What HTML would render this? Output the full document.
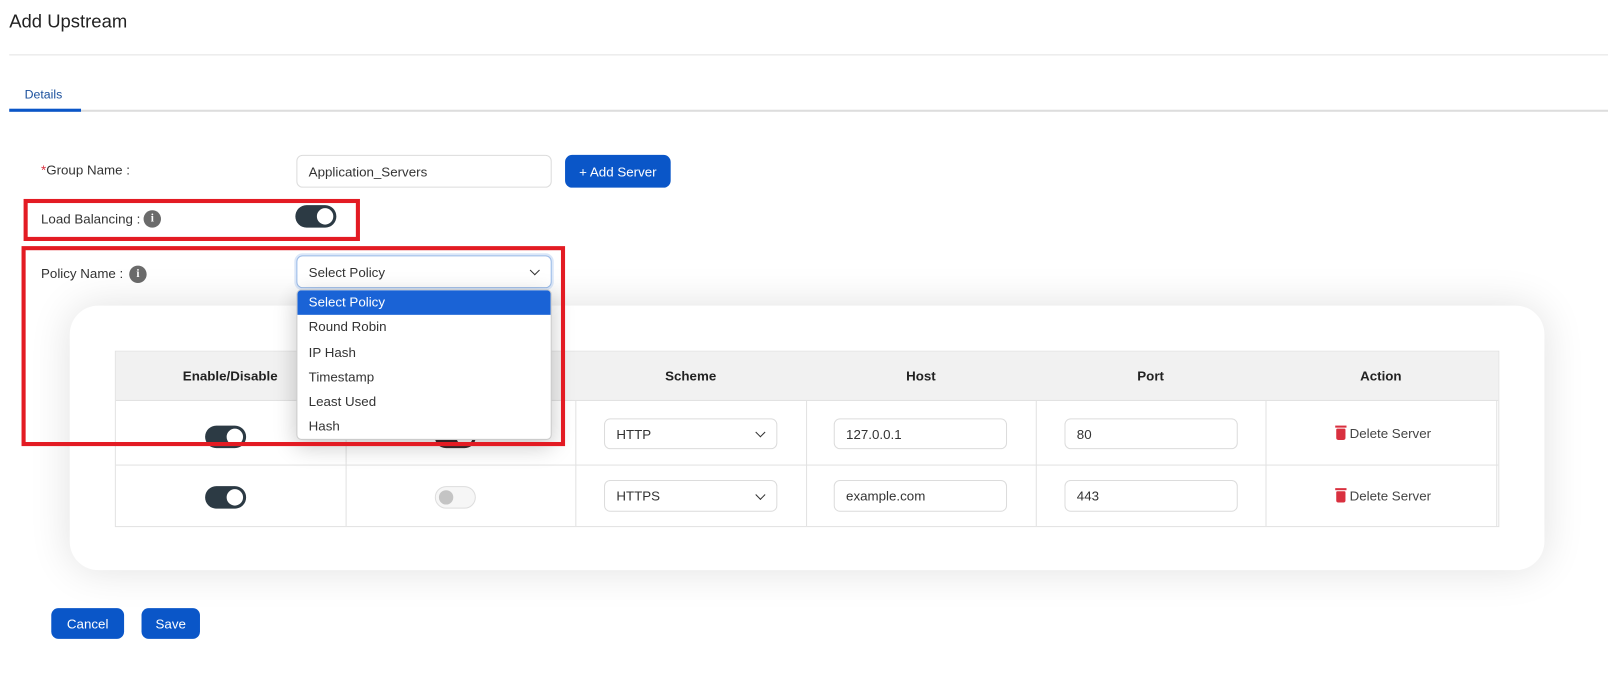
<!DOCTYPE html>
<html><head><meta charset="utf-8"><style>
*{box-sizing:border-box;margin:0;padding:0}
body{width:1608px;height:674px;background:#fff;font-family:"Liberation Sans",sans-serif;color:#333;position:relative;overflow:hidden}
#w{position:absolute;left:0;top:0;width:1568px;height:658px;transform:scale(1.02551);transform-origin:0 0}
.a{position:absolute}
.lbl{font-size:13px;color:#333}
.btn{position:absolute;background:#0a56c8;color:#fff;font-size:13px;border-radius:7px;display:flex;align-items:center;justify-content:center}
.inp{position:absolute;border:1px solid #dcdcdc;border-radius:6px;background:#fff;font-size:13px;color:#333;display:flex;align-items:center;padding-left:11px}
.info{position:absolute;width:17px;height:17px;border-radius:50%;background:#6b6b6b;color:#fff;font-size:11px;font-weight:bold;text-align:center;line-height:17px;font-family:"Liberation Serif",serif}
.tg{position:absolute;width:40px;height:22px;border-radius:11px;background:#2c3a44}
.tg::after{content:"";position:absolute;right:3px;top:3px;width:16px;height:16px;border-radius:50%;background:#fff}
.th{position:absolute;top:342px;height:49px;font-size:13px;font-weight:bold;color:#222;display:flex;align-items:center;justify-content:center}
.chev{position:absolute;right:12px;top:50%;width:7px;height:7px;border-right:1.5px solid #333;border-bottom:1.5px solid #333;transform:translateY(-70%) rotate(45deg)}
.del{position:absolute;font-size:13px;color:#444;display:flex;align-items:center;gap:4px}
.bin{width:9px;height:11px;background:#d9303f;border-radius:1px 1px 2px 2px;position:relative;margin-top:2px}
.bin::before{content:"";position:absolute;left:-1px;top:-3px;width:11px;height:2px;background:#d9303f}
.opt{height:24.3px;line-height:24px;padding-left:11px;font-size:13px;color:#333}
</style></head><body><div id="w">
<div class="a" style="left:9px;top:11px;font-size:18px;color:#222">Add Upstream</div>
<div class="a" style="left:9px;top:53px;width:1559px;height:1px;background:#e3e3e3"></div>
<div class="a" style="left:24px;top:85px;font-size:12px;color:#1a4f9c">Details</div>
<div class="a" style="left:9px;top:107px;width:1559px;height:2px;background:#ddd"></div>
<div class="a" style="left:9px;top:106px;width:70px;height:3px;background:#0a56c8"></div>

<div class="a lbl" style="left:40px;top:158px"><span style="color:#d9303f">*</span>Group Name :</div>
<div class="inp" style="left:289px;top:151px;width:249px;height:32px">Application_Servers</div>
<div class="btn" style="left:551px;top:151px;width:103px;height:32px">+ Add Server</div>

<div class="a lbl" style="left:40px;top:206px">Load Balancing :</div>
<div class="info" style="left:140px;top:205px">i</div>
<div class="tg" style="left:288px;top:200px;width:40px"></div>

<div class="a lbl" style="left:40px;top:259px">Policy Name :</div>
<div class="info" style="left:126px;top:259px">i</div>

<div class="a" style="left:68px;top:298px;width:1438px;height:258px;border-radius:28px;background:#fff;box-shadow:0 0 40px rgba(0,0,0,0.12)"></div>
<div class="a" style="left:112px;top:342px;width:1350px;height:172px;border:1px solid #e2e2e2;background:#fff"></div>
<div class="a" style="left:113px;top:343px;width:1348px;height:48px;background:#f1f1f1;border-bottom:1px solid #e2e2e2"></div>
<div class="a" style="left:113px;top:453px;width:1348px;height:1px;background:#e2e2e2"></div>
<div class="a" style="left:337px;top:391px;width:1px;height:122px;background:#e2e2e2"></div>
<div class="a" style="left:561px;top:391px;width:1px;height:122px;background:#e2e2e2"></div>
<div class="a" style="left:786px;top:391px;width:1px;height:122px;background:#e2e2e2"></div>
<div class="a" style="left:1010px;top:391px;width:1px;height:122px;background:#e2e2e2"></div>
<div class="a" style="left:1234px;top:391px;width:1px;height:122px;background:#e2e2e2"></div>
<div class="a" style="left:1459px;top:391px;width:1px;height:122px;background:#e2e2e2"></div>
<div class="th" style="left:112px;width:225px">Enable/Disable</div>
<div class="th" style="left:561px;width:225px">Scheme</div>
<div class="th" style="left:786px;width:224px">Host</div>
<div class="th" style="left:1010px;width:224px">Port</div>
<div class="th" style="left:1234px;width:225px">Action</div>

<div class="tg" style="left:200px;top:415px"></div>
<div class="tg" style="left:424px;top:415px;background:#3a2a2e"></div>
<div class="inp" style="left:589px;top:408px;width:169px;height:30px">HTTP<span class="chev"></span></div>
<div class="inp" style="left:813px;top:408px;width:169px;height:30px">127.0.0.1</div>
<div class="inp" style="left:1038px;top:408px;width:169px;height:30px">80</div>
<div class="del" style="left:1303px;top:415px"><span class="bin"></span>Delete Server</div>

<div class="tg" style="left:200px;top:474px"></div>
<div class="a" style="left:424px;top:474px;width:40px;height:22px;border-radius:11px;border:1px solid #ddd;background:#f6f6f6"><div style="position:absolute;left:3px;top:3px;width:14px;height:14px;border-radius:50%;background:#c4c4c4"></div></div>
<div class="inp" style="left:589px;top:468px;width:169px;height:31px">HTTPS<span class="chev"></span></div>
<div class="inp" style="left:813px;top:468px;width:169px;height:31px">example.com</div>
<div class="inp" style="left:1038px;top:468px;width:169px;height:31px">443</div>
<div class="del" style="left:1303px;top:476px"><span class="bin"></span>Delete Server</div>

<div class="inp" style="left:289px;top:249px;width:249px;height:32px;border:1px solid #9bbbe8;box-shadow:0 0 0 2px #dbe7f8">Select Policy<span class="chev"></span></div>
<div class="a" style="left:289px;top:282px;width:249px;height:147px;background:#fff;border:1px solid #ccc;border-radius:5px;box-shadow:0 6px 22px rgba(0,0,0,0.22);overflow:hidden">
<div class="opt" style="background:#1a63d6;color:#fff">Select Policy</div>
<div class="opt">Round Robin</div>
<div class="opt">IP Hash</div>
<div class="opt">Timestamp</div>
<div class="opt">Least Used</div>
<div class="opt">Hash</div>
</div>

<div class="a" style="left:23px;top:194px;width:328px;height:41px;border:4px solid #e31b23"></div>
<div class="a" style="left:21px;top:240px;width:530px;height:195px;border:4px solid #e31b23"></div>

<div class="btn" style="left:50px;top:593px;width:71px;height:30px">Cancel</div>
<div class="btn" style="left:138px;top:593px;width:57px;height:30px">Save</div>
</div></body></html>
